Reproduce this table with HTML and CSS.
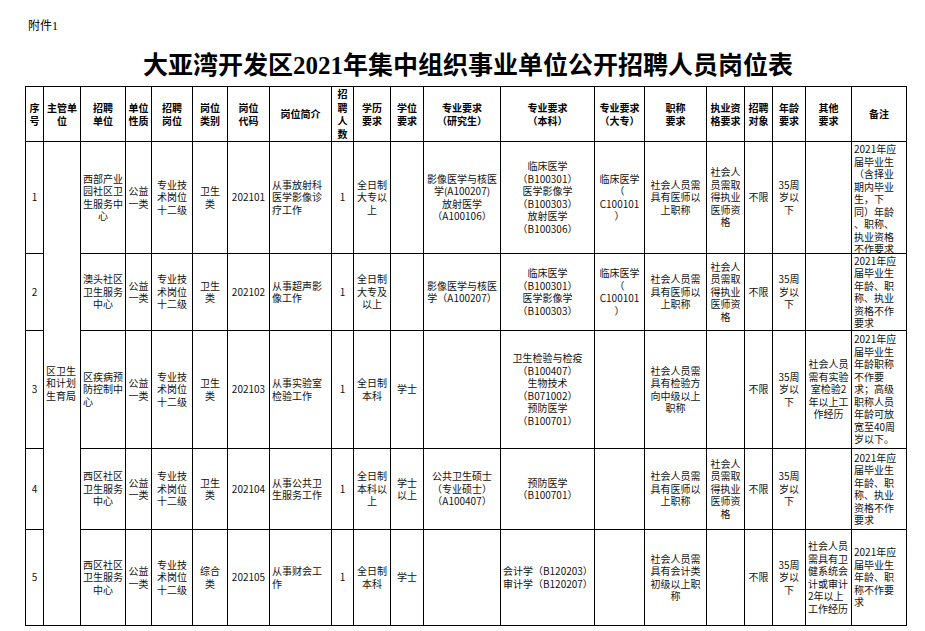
FILE: index.html
```html
<!DOCTYPE html>
<html lang="zh-CN">
<head>
<meta charset="utf-8">
<title>大亚湾开发区2021年集中组织事业单位公开招聘人员岗位表</title>
<link rel="stylesheet" href="styles.css">
</head>
<body>
<div class="page">
  <div class="note">附件<span class="num">1</span></div>
  <h1 class="title">大亚湾开发区<span class="num">2021</span>年集中组织事业单位公开招聘人员岗位表</h1>
  <table class="grid">
    <colgroup>
      <col class="c1"><col class="c2"><col class="c3"><col class="c4"><col class="c5">
      <col class="c6"><col class="c7"><col class="c8"><col class="c9"><col class="c10">
      <col class="c11"><col class="c12"><col class="c13"><col class="c14"><col class="c15">
      <col class="c16"><col class="c17"><col class="c18"><col class="c19"><col class="c20">
    </colgroup>
    <thead>
      <tr class="rh">
        <th>序<br>号</th>
        <th>主管单<br>位</th>
        <th>招聘<br>单位</th>
        <th>单位<br>性质</th>
        <th>招聘<br>岗位</th>
        <th>岗位<br>类别</th>
        <th>岗位<br>代码</th>
        <th>岗位简介</th>
        <th>招<br>聘<br>人<br>数</th>
        <th>学历<br>要求</th>
        <th>学位<br>要求</th>
        <th>专业要求<br>（研究生）</th>
        <th>专业要求<br>（本科）</th>
        <th>专业要求<br>（大专）</th>
        <th>职称<br>要求</th>
        <th>执业资<br>格要求</th>
        <th>招聘<br>对象</th>
        <th>年龄<br>要求</th>
        <th>其他<br>要求</th>
        <th>备注</th>
      </tr>
    </thead>
    <tbody>
      <tr class="r1">
        <td>1</td>
        <td rowspan="5" class="l">区卫生<br>和计划<br>生育局</td>
        <td>西部产业<br>园社区卫<br>生服务中<br>心</td>
        <td>公益<br>一类</td>
        <td>专业技<br>术岗位<br>十二级</td>
        <td>卫生<br>类</td>
        <td>202101</td>
        <td class="l">从事放射科<br>医学影像诊<br>疗工作</td>
        <td>1</td>
        <td>全日制<br>大专以<br>上</td>
        <td></td>
        <td>影像医学与核医<br>学(A100207)<br>放射医学<br>（A100106）</td>
        <td>临床医学<br>（B100301）<br>医学影像学<br>（B100303）<br>放射医学<br>（B100306）</td>
        <td>临床医学<br>（<br>C100101<br>）</td>
        <td>社会人员需<br>具有医师以<br>上职称</td>
        <td>社会人<br>员需取<br>得执业<br>医师资<br>格</td>
        <td>不限</td>
        <td>35周<br>岁以<br>下</td>
        <td></td>
        <td class="l top"><div class="clip">2021年应<br>届毕业生<br>（含择业<br>期内毕业<br>生，下<br>同）年龄<br>、职称、<br>执业资格<br>不作要求</div></td>
      </tr>
      <tr class="r2">
        <td>2</td>
        <td>澳头社区<br>卫生服务<br>中心</td>
        <td>公益<br>一类</td>
        <td>专业技<br>术岗位<br>十二级</td>
        <td>卫生<br>类</td>
        <td>202102</td>
        <td class="l">从事超声影<br>像工作</td>
        <td>1</td>
        <td>全日制<br>大专及<br>以上</td>
        <td></td>
        <td>影像医学与核医<br>学（A100207）</td>
        <td>临床医学<br>（B100301）<br>医学影像学<br>（B100303）</td>
        <td>临床医学<br>（<br>C100101<br>）</td>
        <td>社会人员需<br>具有医师以<br>上职称</td>
        <td>社会人<br>员需取<br>得执业<br>医师资<br>格</td>
        <td>不限</td>
        <td>35周<br>岁以<br>下</td>
        <td></td>
        <td class="l">2021年应<br>届毕业生<br>年龄、职<br>称、执业<br>资格不作<br>要求</td>
      </tr>
      <tr class="r3">
        <td>3</td>
        <td class="l">区疾病预<br>防控制中<br>心</td>
        <td>公益<br>一类</td>
        <td>专业技<br>术岗位<br>十二级</td>
        <td>卫生<br>类</td>
        <td>202103</td>
        <td class="l">从事实验室<br>检验工作</td>
        <td>1</td>
        <td>全日制<br>本科</td>
        <td>学士</td>
        <td></td>
        <td>卫生检验与检疫<br>（B100407）<br>生物技术<br>（B071002）<br>预防医学<br>（B100701）</td>
        <td></td>
        <td>社会人员需<br>具有检验方<br>向中级以上<br>职称</td>
        <td></td>
        <td>不限</td>
        <td>35周<br>岁以<br>下</td>
        <td>社会人员<br>需有实验<br>室检验2<br>年以上工<br>作经历</td>
        <td class="l">2021年应<br>届毕业生<br>年龄职称<br>不作要<br>求；高级<br>职称人员<br>年龄可放<br>宽至40周<br>岁以下。</td>
      </tr>
      <tr class="r4">
        <td>4</td>
        <td>西区社区<br>卫生服务<br>中心</td>
        <td>公益<br>一类</td>
        <td>专业技<br>术岗位<br>十二级</td>
        <td>卫生<br>类</td>
        <td>202104</td>
        <td class="l">从事公共卫<br>生服务工作</td>
        <td>1</td>
        <td>全日制<br>本科以<br>上</td>
        <td>学士<br>以上</td>
        <td>公共卫生硕士<br>（专业硕士）<br>（A100407）</td>
        <td>预防医学<br>（B100701）</td>
        <td></td>
        <td>社会人员需<br>具有医师以<br>上职称</td>
        <td>社会人<br>员需取<br>得执业<br>医师资<br>格</td>
        <td>不限</td>
        <td>35周<br>岁以<br>下</td>
        <td></td>
        <td class="l">2021年应<br>届毕业生<br>年龄、职<br>称、执业<br>资格不作<br>要求</td>
      </tr>
      <tr class="r5">
        <td>5</td>
        <td>西区社区<br>卫生服务<br>中心</td>
        <td>公益<br>一类</td>
        <td>专业技<br>术岗位<br>十二级</td>
        <td>综合<br>类</td>
        <td>202105</td>
        <td class="l">从事财会工<br>作</td>
        <td>1</td>
        <td>全日制<br>本科</td>
        <td>学士</td>
        <td></td>
        <td>会计学（B120203）<br>审计学（B120207）</td>
        <td></td>
        <td>社会人员需<br>具有会计类<br>初级以上职<br>称</td>
        <td></td>
        <td>不限</td>
        <td>35周<br>岁以<br>下</td>
        <td class="l">社会人员<br>需具有卫<br>健系统会<br>计或审计<br>2年以上<br>工作经历</td>
        <td class="l">2021年应<br>届毕业生<br>年龄、职<br>称不作要<br>求</td>
      </tr>
    </tbody>
  </table>
</div>
</body>
</html>
```
FILE: styles.css
```css
html, body {
  margin: 0;
  padding: 0;
  background: #ffffff;
}

.page {
  padding: 18px 0 0 25px;
  font-family: "Noto Sans CJK SC", "Noto Sans", sans-serif;
  color: #000;
}

.note {
  margin: 0 0 0 3px;
  font-size: 12px;
  line-height: 14px;
  height: 14px;
}

.note .num {
  font-family: "Liberation Serif", serif;
}

.title {
  margin: 16px 0 0 0;
  width: 881px;
  padding-left: 5px;
  box-sizing: border-box;
  text-align: center;
  font-size: 25px;
  line-height: 30px;
  height: 30px;
  font-weight: 700;
  letter-spacing: 0;
}

.title .num {
  font-family: "Liberation Serif", serif;
  font-weight: 700;
}

.grid {
  margin-top: 8px;
  border-collapse: collapse;
  table-layout: fixed;
  width: 881px;
  font-size: 10px;
  line-height: 12.5px;
  color: #111;
}

.grid th,
.grid td {
  border: 1px solid #000;
  padding: 0 2px;
  text-align: center;
  vertical-align: middle;
  white-space: nowrap;
  overflow: hidden;
}

.grid th {
  font-weight: 700;
  line-height: 13.3px;
  color: #000;
}

.grid td.l {
  text-align: left;
  padding-left: 2px;
}

.grid td.top {
  vertical-align: top;
}

.clip {
  height: 110px;
  overflow: hidden;
  padding-top: 1px;
}

.rh { height: 55px; }
.r1 { height: 111px; }
.r2 { height: 77px; }
.r3 { height: 118px; }
.r4 { height: 81px; }
.r5 { height: 96px; }

.c1 { width: 18px; }
.c2 { width: 37px; }
.c3 { width: 45px; }
.c4 { width: 26px; }
.c5 { width: 41px; }
.c6 { width: 35px; }
.c7 { width: 42px; }
.c8 { width: 62px; }
.c9 { width: 22px; }
.c10 { width: 37px; }
.c11 { width: 33px; }
.c12 { width: 77px; }
.c13 { width: 94px; }
.c14 { width: 50px; }
.c15 { width: 62px; }
.c16 { width: 38px; }
.c17 { width: 28px; }
.c18 { width: 33px; }
.c19 { width: 46px; }
.c20 { width: 55px; }
```
